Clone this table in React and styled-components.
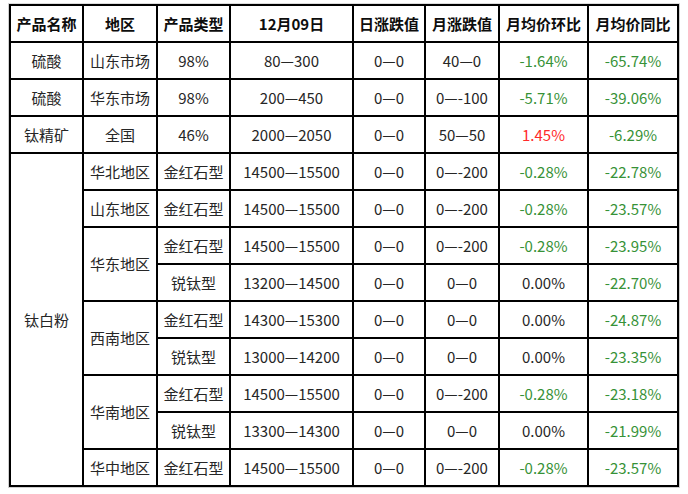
import React from 'react';
import styled, { createGlobalStyle } from 'styled-components';

const GlobalStyle = createGlobalStyle`
  html, body {
    margin: 0;
    padding: 0;
    background: #ffffff;
  }
  body {
    font-family: "Noto Sans CJK SC", "Noto Sans", sans-serif;
  }
`;

const Page = styled.div`
  padding: 3px 0 0 8px;
`;

const Frame = styled.div`
  display: inline-block;
  border: 1px solid #cfcfcf;
  border-top-color: #dcdcdc;
`;

const Table = styled.table`
  border-collapse: collapse;
  table-layout: fixed;
  width: 669px;
`;

const Cell = styled.td`
  border: 2px solid #000;
  height: 35px;
  padding: 0;
  text-align: center;
  vertical-align: middle;
  font-size: 15px;
  line-height: 20px;
  color: ${p => (p.$tone === 'down' ? '#379237' : p.$tone === 'up' ? '#ff2a2a' : '#262626')};
  white-space: nowrap;
`;

const HeadCell = styled(Cell).attrs({ as: 'th' })`
  font-weight: bold;
  color: #0d0d0d;
`;

const widths = [73, 74, 73, 123, 72, 74, 89, 90];
const headers = ['产品名称', '地区', '产品类型', '12月09日', '日涨跌值', '月涨跌值', '月均价环比', '月均价同比'];

const tone = v => (v.startsWith('-') ? 'down' : v === '0.00%' ? null : 'up');

// [name, nameSpan, region, regionSpan, type, price, day, month, mom, yoy]
const rows = [
  ['硫酸', 1, '山东市场', 1, '98%', '80—300', '0—0', '40—0', '-1.64%', '-65.74%'],
  ['硫酸', 1, '华东市场', 1, '98%', '200—450', '0—0', '0—-100', '-5.71%', '-39.06%'],
  ['钛精矿', 1, '全国', 1, '46%', '2000—2050', '0—0', '50—50', '1.45%', '-6.29%'],
  ['钛白粉', 9, '华北地区', 1, '金红石型', '14500—15500', '0—0', '0—-200', '-0.28%', '-22.78%'],
  [null, 0, '山东地区', 1, '金红石型', '14500—15500', '0—0', '0—-200', '-0.28%', '-23.57%'],
  [null, 0, '华东地区', 2, '金红石型', '14500—15500', '0—0', '0—-200', '-0.28%', '-23.95%'],
  [null, 0, null, 0, '锐钛型', '13200—14500', '0—0', '0—0', '0.00%', '-22.70%'],
  [null, 0, '西南地区', 2, '金红石型', '14300—15300', '0—0', '0—0', '0.00%', '-24.87%'],
  [null, 0, null, 0, '锐钛型', '13000—14200', '0—0', '0—0', '0.00%', '-23.35%'],
  [null, 0, '华南地区', 2, '金红石型', '14500—15500', '0—0', '0—-200', '-0.28%', '-23.18%'],
  [null, 0, null, 0, '锐钛型', '13300—14300', '0—0', '0—0', '0.00%', '-21.99%'],
  [null, 0, '华中地区', 1, '金红石型', '14500—15500', '0—0', '0—-200', '-0.28%', '-23.57%'],
];

export default function App() {
  return (
    <>
      <GlobalStyle />
      <Page>
        <Frame>
          <Table>
            <colgroup>
              {widths.map((w, i) => (
                <col key={i} style={{ width: w }} />
              ))}
            </colgroup>
            <thead>
              <tr>
                {headers.map(h => (
                  <HeadCell key={h}>{h}</HeadCell>
                ))}
              </tr>
            </thead>
            <tbody>
              {rows.map((r, i) => {
                const [name, nameSpan, region, regionSpan, type, price, day, month, mom, yoy] = r;
                return (
                  <tr key={i}>
                    {name && <Cell rowSpan={nameSpan}>{name}</Cell>}
                    {region && <Cell rowSpan={regionSpan}>{region}</Cell>}
                    <Cell>{type}</Cell>
                    <Cell>{price}</Cell>
                    <Cell>{day}</Cell>
                    <Cell>{month}</Cell>
                    <Cell $tone={tone(mom)}>{mom}</Cell>
                    <Cell $tone={tone(yoy)}>{yoy}</Cell>
                  </tr>
                );
              })}
            </tbody>
          </Table>
        </Frame>
      </Page>
    </>
  );
}
